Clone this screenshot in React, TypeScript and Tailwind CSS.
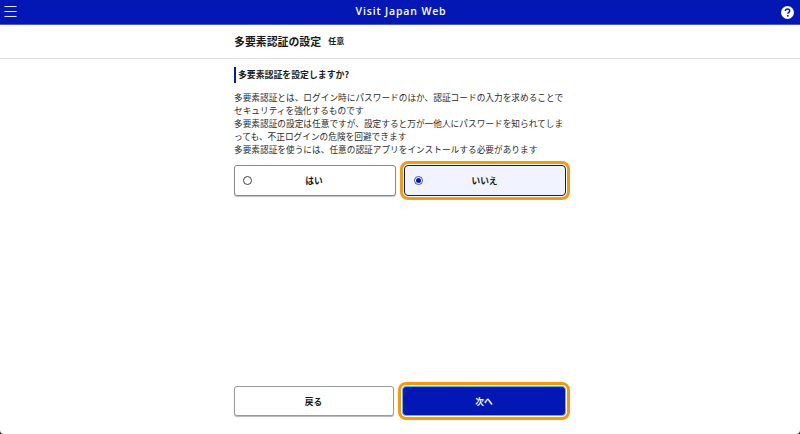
import React from 'react';
import { Menu } from 'lucide-react';

export default function App() {
  return (
    <div className="h-[434px] w-[800px] overflow-hidden bg-[#222222]">
      <div className="flex h-[434px] w-[800px] flex-col overflow-hidden rounded-b-[4px] bg-white text-[#1a1a1a] font-['Noto_Sans_CJK_JP','Noto_Sans',sans-serif]">
        <header className="flex h-[25px] shrink-0 items-center justify-between border-b border-[#4a5bd0] bg-[#0317b5] pr-[6px] pl-[2px] text-white">
          <Menu className="mb-[1px] h-[17px] w-[17px]" strokeWidth={1.3} />
          <div className="mb-[1px] pl-[2px] font-['Open_Sans',sans-serif] text-[10.5px] font-semibold tracking-[0.85px]">Visit Japan Web</div>
          <svg viewBox="0 0 24 24" className="h-[13px] w-[13px]">
            <circle cx="12" cy="12" r="12" fill="#fff" />
            <path d="M8 9.2c0-2.3 1.8-3.7 4.1-3.7 2.4 0 4 1.4 4 3.4 0 1.6-.9 2.4-2 3.2-1 .7-1.4 1.1-1.4 2.2" fill="none" stroke="#0317b5" strokeWidth="2.8" />
            <circle cx="12.6" cy="18.2" r="1.8" fill="#0317b5" />
          </svg>
        </header>

        <div className="flex h-[34px] shrink-0 justify-center border-b border-[#dddddd]">
          <div className="mb-[1px] flex w-[332px] items-center gap-[7px]">
            <h1 className="text-[10.9px] font-bold">多要素認証の設定</h1>
            <span className="text-[8px] font-bold">任意</span>
          </div>
        </div>

        <main className="flex w-[332px] flex-1 flex-col self-center pt-[8px]">
          <h2 className="border-l-[2px] border-[#0317b5] pl-[2px] text-[8.9px] leading-[16px] font-bold">多要素認証を設定しますか?</h2>
          <p className="mt-[8px] text-[8.68px] leading-[13px] text-[#2b2b2b]">
            多要素認証とは、ログイン時にパスワードのほか、認証コードの入力を求めることでセキュリティを強化するものです
            <br />
            多要素認証の設定は任意ですが、設定すると万が一他人にパスワードを知られてしまっても、不正ログインの危険を回避できます
            <br />
            多要素認証を使うには、任意の認証アプリをインストールする必要があります
          </p>

          <div className="mt-[9px] flex justify-between">
            <label className="flex h-[31px] w-[162px] items-center rounded-[3px] border border-[#8a8a8a] bg-white pl-[8px] shadow-[0_1px_1px_rgba(0,0,0,0.25)]">
              <span className="h-[9px] w-[9px] rounded-full border border-[#444444] bg-white" />
              <span className="flex-1 pt-[1px] pr-[19px] text-center text-[8.7px] font-bold">はい</span>
            </label>
            <label className="flex h-[31px] w-[162px] items-center rounded-[4px] border-[1.5px] border-[#10175e] bg-[#f1f3ff] pl-[9px] outline-[3px] outline-offset-[1px] outline-[#f59a10]">
              <span className="flex h-[9px] w-[9px] items-center justify-center rounded-full border border-[#3d4cc4] bg-white">
                <span className="h-[5px] w-[5px] rounded-full bg-[#0317b5]" />
              </span>
              <span className="flex-1 pt-[1px] pr-[19px] text-center text-[8.7px] font-bold">いいえ</span>
            </label>
          </div>

          <div className="mt-auto mb-[18px] flex justify-between">
            <button className="h-[30px] w-[160px] rounded-[3px] border border-[#9a9a9a] bg-white pt-[1px] pr-[1px] text-[8.7px] font-bold shadow-[0_1px_1px_rgba(0,0,0,0.3)]">戻る</button>
            <button className="h-[30px] w-[164px] rounded-[4px] border border-[#62b4f0] bg-[#0317b5] pt-[1px] text-[8.7px] font-bold text-white outline-[3px] outline-offset-[1px] outline-[#f59a10]">次へ</button>
          </div>
        </main>
      </div>
    </div>
  );
}
